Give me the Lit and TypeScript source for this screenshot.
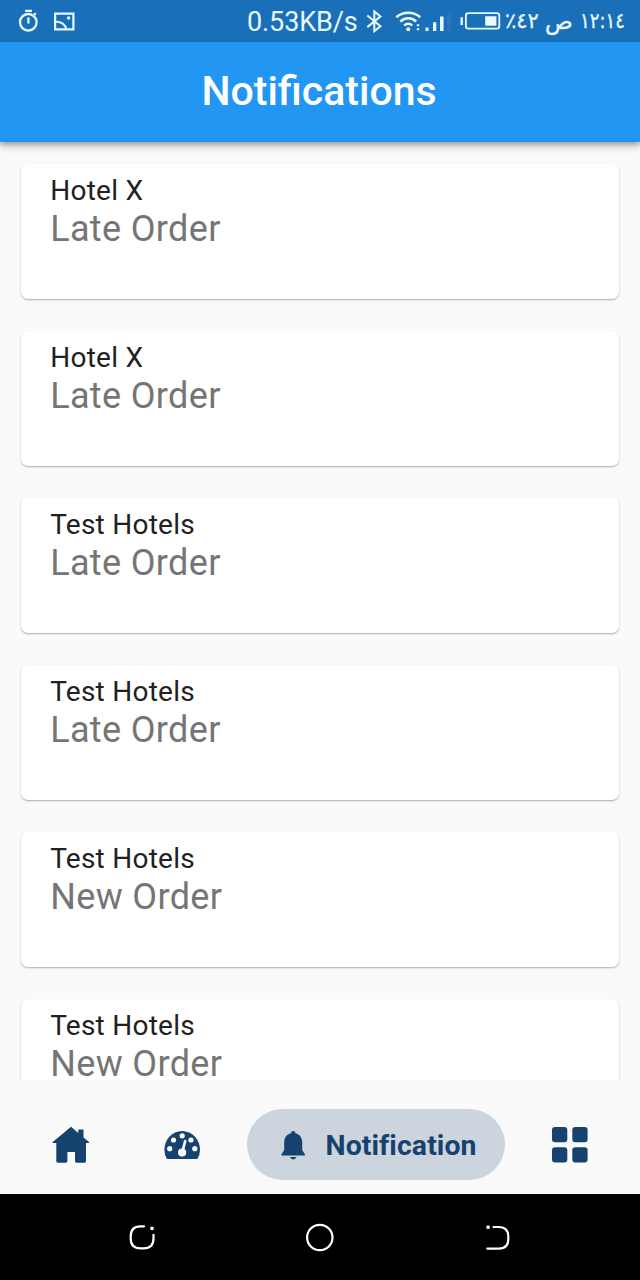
import { LitElement, html, css, svg } from "lit";
import { customElement, property } from "lit/decorators.js";

@customElement("status-bar")
class StatusBar extends LitElement {
  static styles = css`
    :host { display: flex; align-items: center; height: 42px; background: #1a70b8; color: #eaf8ff; box-sizing: border-box; border-bottom: 1px solid #1b77c6; }
    svg { display: block; flex: none; }
    .left { display: flex; margin-left: 17px; flex: 1; gap: 12px; }
    .right { display: flex; align-items: center; height: 42px; width: 393px; }
    .speed { font-size: 27px; line-height: 42px; width: 113px; white-space: nowrap; padding-top: 2px; letter-spacing: -0.1px; }
    .ar { flex: none; font-family: "DejaVu Sans", sans-serif; font-size: 21px; line-height: 40px; direction: ltr; unicode-bidi: bidi-override; white-space: nowrap; -webkit-text-stroke: .3px currentColor; }
    .pct { width: 40px; padding-left: 1px; }
    .am { width: 35px; font-size: 23px; }
    .time { width: 52px; transform: scaleX(.86); transform-origin: left; }
  `;
  render() {
    return html`
      <div class="left">
        <svg width="24" height="28" viewBox="17 7 24 28" fill="none" stroke="currentColor">
          <circle cx="28.3" cy="22.3" r="8.3" stroke-width="2.3"/>
          <path d="M25 10.8h7M28.4 17.5v6M34 14.5l2-1" stroke-width="2.3"/>
        </svg>
        <svg width="24" height="28" viewBox="53 7 24 28" fill="none" stroke="currentColor" stroke-width="2.2">
          <path d="M55.1 13.6h18.3v15.8H55.1z"/>
          <path d="M55 21.5c6 .3 10.5 3 11.2 8"/>
          <circle cx="68.6" cy="18" r="1.7" fill="currentColor" stroke="none"/>
        </svg>
      </div>
      <div class="right">
        <div class="speed">0.53KB/s</div>
        <svg width="30" height="42" viewBox="360 0 30 42" fill="none" stroke="currentColor" stroke-width="2">
          <path d="M367.3 15.5l13.2 10.7-6.2 5V11.4l6.2 5-13.2 10.7"/>
        </svg>
        <svg width="34" height="42" viewBox="390 0 34 42" fill="none" stroke="currentColor" stroke-width="2.6">
          <path d="M396.3 17.3c7-6 17-6 24 0M400.3 21.5c5-4.2 11-4.2 16 0M404.2 25.4c2.8-2.2 5.4-2.2 8 0"/>
          <circle cx="408.2" cy="29.3" r="2" fill="currentColor" stroke="none"/>
          <path d="M416.8 25.2h2.4M416.8 29.2h2.4" stroke-width="2"/>
        </svg>
        <svg width="30" height="42" viewBox="424 0 30 42" fill="currentColor">
          <path d="M425.5 27.5h3v3.6h-3zM433 22.3h3.3v8.8H433zM440 16.5h3.6v14.6H440z"/>
          <path d="M447 13h4v18h-4z" opacity=".06"/>
        </svg>
        <svg width="50" height="42" viewBox="454 0 50 42">
          <rect x="465.9" y="13.2" width="33.4" height="15.4" rx="2.4" fill="none" stroke="currentColor" stroke-width="1.8"/>
          <path d="M485.2 16.2h11.2v9.6h-11.2zM460.5 17.2h2.4v7.8h-2.4z" fill="currentColor"/>
        </svg>
        <div class="ar pct">٪٤٢</div>
        <div class="ar am">ص</div>
        <div class="ar time">١٢:١٤</div>
      </div>`;
  }
}

@customElement("notice-card")
class NoticeCard extends LitElement {
  @property() heading = "";
  @property() detail = "";
  static styles = css`
    :host { display: block; flex: none; height: 135px; box-sizing: border-box; padding: 11px 29px; border-radius: 7px; background: #fff; box-shadow: 0 1px 2px rgba(0,0,0,.28), 0 1px 1px rgba(0,0,0,.05); }
    .heading { color: #212121; font-size: 28px; line-height: 32px; letter-spacing: .25px; }
    .detail { color: #757575; font-size: 36px; line-height: 44px; letter-spacing: .35px; }
  `;
  render() {
    return html`<div class="heading">${this.heading}</div><div class="detail">${this.detail}</div>`;
  }
}

const homeIcon = svg`<path d="M71 1126.8l7.3 6.3v-3.6h5.2v8l5.7 4.7v.9H86v18q0 1.6-1.6 1.6h-7.9q-1.5 0-1.5-1.6v-9.2h-7.6v9.2q0 1.6-1.5 1.6h-8q-1.6 0-1.6-1.6v-18H52.5v-.9z"/>`;
const gaugeIcon = svg`<path fill-rule="evenodd" d="M167 1159q-2.6-4.4-2.6-9.3c0-10.4 8-18.8 17.8-18.8s17.8 8.4 17.8 18.8q0 4.9-2.6 9.3z"/>
  <g fill="#fafafa"><circle cx="169.7" cy="1148.7" r="2.6"/><circle cx="173.5" cy="1140" r="2.6"/><circle cx="182.2" cy="1135.8" r="2.6"/><circle cx="191" cy="1140" r="2.6"/><circle cx="194.8" cy="1148.7" r="2.6"/><circle cx="182.1" cy="1152.5" r="4.1"/></g>
  <path d="M182.4 1151.5l2.8-10.3" stroke="#fafafa" stroke-width="2.7" stroke-linecap="round"/>`;
const bellIcon = svg`<path d="M293.2 1131c1.4 0 2.1.9 2.1 2.2 4.5 1 6.9 4.5 6.9 9.3v7.5l2.7 4.2v1.3h-23.4v-1.3l2.7-4.2v-7.5c0-4.8 2.4-8.3 6.9-9.3 0-1.3.7-2.2 2.1-2.2zM290 1157h6.4q-.7 2.4-3.2 2.4t-3.2-2.4z"/>`;
const gridIcon = svg`<rect x="552" y="1127" width="15.3" height="15.3" rx="3"/><rect x="572.3" y="1127" width="15.3" height="15.3" rx="3"/><rect x="552" y="1147.3" width="15.3" height="15.3" rx="3"/><rect x="572.3" y="1147.3" width="15.3" height="15.3" rx="3"/>`;

@customElement("tab-bar")
class TabBar extends LitElement {
  static styles = css`
    :host { display: flex; align-items: center; flex: none; height: 114px; box-sizing: border-box; padding: 15px 52px 0; background: #fafafa; color: #15426e; }
    svg { display: block; flex: none; fill: currentColor; }
    .gauge { margin-left: 75px; }
    .pill { flex: none; display: flex; align-items: center; box-sizing: border-box; width: 258px; height: 71px; margin: 0 46px; border-radius: 36px; background: #ccd4dd; padding-left: 28px; gap: 14.5px; font-size: 28.4px; font-weight: 700; white-space: nowrap; }
    .pill span { letter-spacing: .1px; padding-top: 1px; }
  `;
  render() {
    return html`
      <svg width="37" height="40" viewBox="52 1125 37 40">${homeIcon}</svg>
      <svg class="gauge" width="37" height="40" viewBox="164 1125 37 40">${gaugeIcon}</svg>
      <div class="pill"><svg width="36" height="40" viewBox="275 1125 36 40">${bellIcon}</svg><span>Notification</span></div>
      <svg width="37" height="40" viewBox="551 1125 37 40">${gridIcon}</svg>`;
  }
}

@customElement("system-nav")
class SystemNav extends LitElement {
  static styles = css`
    :host { display: flex; align-items: center; justify-content: space-between; flex: none; height: 86px; box-sizing: border-box; padding: 0 122px; background: #000; }
    svg { display: block; fill: none; stroke: #fff; stroke-width: 2.2; stroke-linecap: round; }
  `;
  render() {
    return html`
      <svg width="40" height="40" viewBox="122 1217 40 40"><path d="M144 1226.3h-3.5q-9.8 0-9.8 9.8v2.4q0 9.8 9.8 9.8h3.2q9.8 0 9.8-9.8v-3.7"/><path d="M150.4 1226.8h3.2v3.2h-3.2z" fill="#fff" stroke="none"/></svg>
      <svg width="40" height="40" viewBox="300 1217 40 40"><circle cx="319.8" cy="1237.5" r="12.7"/></svg>
      <svg width="40" height="40" viewBox="478 1217 40 40"><path d="M493.5 1227h5.2q9.6 0 9.6 9.6v2.4q0 9.6-9.6 9.6h-11.4"/><path d="M486.5 1225.6h3.2v3.2h-3.2z" fill="#fff" stroke="none"/></svg>`;
  }
}

@customElement("app-root")
class AppRoot extends LitElement {
  static styles = css`
    :host { display: flex; flex-direction: column; width: 640px; height: 1280px; overflow: hidden; background: #fafafa; font-family: Roboto, sans-serif; }
    status-bar { flex: none; }
    .title { flex: none; z-index: 1; box-sizing: border-box; height: 100px; padding-right: 2px; line-height: 99px; margin: 0; text-align: center; font-size: 41px; font-weight: 500; color: #fff; background: #2296f3; box-shadow: 0 4px 8px rgba(0,0,0,.26), 0 2px 5px rgba(0,0,0,.18); }
    .list { flex: 1; min-height: 0; overflow: hidden; display: flex; flex-direction: column; gap: 32px; padding: 21.5px 21.4px 0 21.2px; }
  `;
  private items = [
    ["Hotel X", "Late Order"],
    ["Hotel X", "Late Order"],
    ["Test Hotels", "Late Order"],
    ["Test Hotels", "Late Order"],
    ["Test Hotels", "New Order"],
    ["Test Hotels", "New Order"],
  ];
  render() {
    return html`
      <status-bar></status-bar>
      <h1 class="title">Notifications</h1>
      <div class="list">${this.items.map(([h, d]) => html`<notice-card .heading=${h} .detail=${d}></notice-card>`)}</div>
      <tab-bar></tab-bar>
      <system-nav></system-nav>`;
  }
}
